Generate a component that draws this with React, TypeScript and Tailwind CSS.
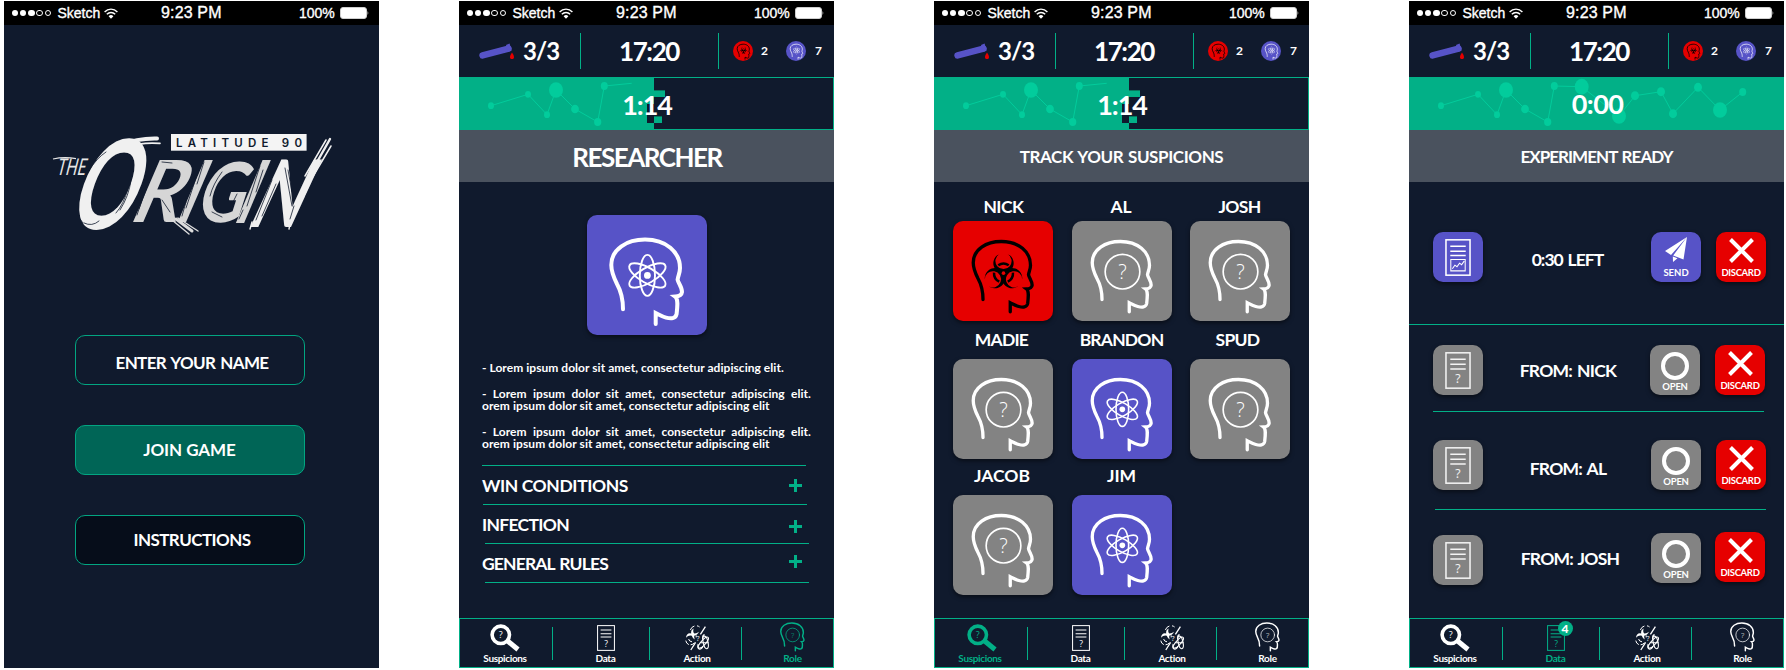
import React from "react";

type HeadKind = "atom" | "unknown" | "hazard";

function Head({ kind, className, viewBox = "0 0 120 120", stroke = 4 }: { kind: HeadKind; className: string; viewBox?: string; stroke?: number }) {
  return (
    <svg viewBox={viewBox} className={className} fill="none" stroke="currentColor" strokeLinecap="round">
      <path
        strokeWidth={stroke}
        d="M36 94.2C36 85 35 78 30 69C26.5 62 24.3 56 24.3 50C24.3 34 40 24.6 58 24.6C79 24.6 93 37 93 53C93 58 91 61 90.6 64.6C91.2 68 95 72 95 77C94.6 80.4 92 81.4 88.2 81.6C91.4 84 90.4 92 89.6 99C88.5 103.8 84 104 79 102.6C75 101.4 72 99.6 68.7 98V109"
      />
      {kind === "atom" && (
        <g strokeWidth={stroke * 0.48}>
          <ellipse cx="60.4" cy="60.4" rx="7.6" ry="20.5" />
          <ellipse cx="60.4" cy="60.4" rx="7.6" ry="20.5" transform="rotate(60 60.4 60.4)" />
          <ellipse cx="60.4" cy="60.4" rx="7.6" ry="20.5" transform="rotate(-60 60.4 60.4)" />
          <circle cx="60.4" cy="60.4" r="3.4" fill="currentColor" stroke="none" />
        </g>
      )}
      {kind === "unknown" && (
        <>
          <circle cx="60.6" cy="60.8" r="20.8" strokeWidth={stroke * 0.5} />
          <text x="60.6" y="69" textAnchor="middle" fontSize="24" fill="currentColor" stroke="none" className="font-['Open_Sans',sans-serif] font-light">?</text>
        </>
      )}
      {kind === "hazard" && (
        <g transform="translate(60.6 62.6) scale(1.08)">
          {["rotate(0)", "rotate(120)", "rotate(240)"].map((t) => (
            <g key={t} transform={t}>
              <path d="M-4.4 -21.4A11.3 11.3 0 1 0 4.4 -21.4A9 9 0 1 1 -4.4 -21.4Z" fill="currentColor" stroke="none" />
              <path d="M-5.8 -8.8A10.4 10.4 0 0 1 5.8 -8.8" strokeWidth="2.8" strokeLinecap="butt" />
            </g>
          ))}
          <circle r="2" fill="#e60000" stroke="none" />
        </g>
      )}
    </svg>
  );
}

function StatusBar() {
  return (
    <div className="flex h-6 shrink-0 items-center bg-black pl-[7.5px] font-['Liberation_Sans',sans-serif] text-sm text-white">
      <div className="flex w-[40px] gap-[1.7px]">
        {[1, 1, 1, 0, 0].map((on, i) => (
          <span key={i} className={on ? "size-[6.6px] shrink-0 rounded-full bg-white" : "size-[6.6px] shrink-0 rounded-full border border-white"} />
        ))}
      </div>
      <span className="ml-[6px] w-[46.5px] [-webkit-text-stroke:0.35px_white]">Sketch</span>
      <svg viewBox="0 0 14 11" className="h-[11px] w-[14px]" fill="none" stroke="white" strokeWidth="1.4">
        <path d="M.6 4C4.2.2 9.8.2 13.4 4M2.8 6.3C5.2 3.9 8.8 3.9 11.2 6.3" />
        <path d="M4.6 8.2Q7 6 9.4 8.2L7 10.8Z" fill="white" stroke="none" />
      </svg>
      <span className="ml-[43px] w-[64px] text-base tracking-[0.15px] [-webkit-text-stroke:0.35px_white]">9:23 PM</span>
      <span className="ml-[74px] w-[41px] [-webkit-text-stroke:0.35px_white]">100%</span>
      <svg viewBox="0 0 29 12" className="h-3 w-[29px]">
        <rect x=".5" y=".5" width="26" height="11" rx="2.5" fill="white" stroke="#cfcfcf" />
        <path d="M27.6 3.8Q29 6 27.6 8.2Z" fill="white" />
      </svg>
    </div>
  );
}

function Header() {
  return (
    <div className="flex h-[52px] shrink-0 items-center text-white">
      <div className="flex w-[121px] items-center pl-5">
        <svg viewBox="0 0 36 20" className="h-5 w-9">
          <path d="M3.6 14.4L29.5 7.6" stroke="#5753c7" strokeWidth="6.6" strokeLinecap="round" />
          <path d="M27 4L30.6 2.6L32.4 9.8L28.6 11Z" fill="#5753c7" />
          <path d="M33 11.5Q36 16 34.6 17.4Q33 18.8 31.4 17.4Q30 16 33 11.5Z" fill="#e60000" />
        </svg>
        <span className="pl-2 text-[24px] leading-none font-bold tracking-[-0.9px]">3/3</span>
      </div>
      <i className="h-9 w-px bg-[#02b087]" />
      <div className="w-[137px] pr-px text-center text-[26px] leading-none font-bold tracking-[-1.4px]">17:20</div>
      <i className="h-9 w-px bg-[#02b087]" />
      <div className="flex items-center pl-[14px] text-[12px] font-bold">
        <span className="flex size-5 items-center justify-center rounded-full bg-[#e60000] text-black">
          <Head kind="hazard" viewBox="18 18 84 96" stroke={4.5} className="h-[17px] w-[15px]" />
        </span>
        <span className="w-[33px] pl-2">2</span>
        <span className="flex size-5 items-center justify-center rounded-full bg-[#5753c7] text-white/80">
          <Head kind="atom" viewBox="18 18 84 96" stroke={5} className="h-[17px] w-[15px]" />
        </span>
        <span className="pl-[9px]">7</span>
      </div>
    </div>
  );
}

const NODES: [number, number, number][] = [
  [32, 28.7, 3], [69, 17.3, 3], [88, 37.7, 3], [97, 13, 7], [116, 32, 3.9], [138.7, 45, 3.6], [145.3, 9, 3.5], [172.7, 9.7, 7],
  [210, 39, 7], [226, 18.7, 4], [252, 14.7, 4], [264, 36.7, 4], [289, 10.3, 4], [311, 33, 7], [333.7, 15, 3.5],
];

function Timer({ full }: { full?: boolean }) {
  const nodes = full ? NODES : NODES.slice(0, 7);
  const line = nodes.map(([x, y]) => `${x},${y}`).join(" ") + (full ? "" : " 172.7,6.3");
  return (
    <div className="relative flex h-[53px] shrink-0 items-center justify-center">
      <svg viewBox="0 0 375 53" className="absolute inset-0 h-[53px] w-[375px]" shapeRendering="crispEdges">
        <rect x=".5" y=".5" width="374" height="52" fill="none" stroke="#02b087" />
        <rect width={full ? 375 : 195} height="53" fill="#02b087" />
        {!full && (
          <>
            <rect x="195" y="13" width="11" height="7" fill="#02b087" />
            <rect x="195" y="13" width="11" height="1" fill="#08775f" />
            <rect x="188" y="27" width="7" height="19" fill="#101a2d" />
            <rect x="195" y="39" width="8" height="7" fill="#02b087" />
            <rect x="195" y="39" width="8" height="1" fill="#08775f" />
          </>
        )}
        <g shapeRendering="geometricPrecision" fill="#02cc9c">
          <polyline points={line} fill="none" stroke="#02cc9c" strokeWidth="1" />
          {nodes.map(([x, y, r]) => (
            <ellipse key={x} cx={x} cy={y} rx={r} ry={r * 1.12} />
          ))}
        </g>
      </svg>
      <span className={full ? "relative pl-[2px] text-[27px] leading-none font-bold tracking-[-0.6px] text-white" : "relative pt-[2px] pl-px text-[27px] leading-none font-bold tracking-[-1.1px] text-white"}>
        {full ? "0:00" : "1:14"}
      </span>
    </div>
  );
}

function TitleBar({ children, style }: { children: string; style: string }) {
  return <div className={`flex h-[52px] shrink-0 items-center justify-center bg-[#4a525e] font-bold text-white ${style}`}>{children}</div>;
}

type Tab = "suspicions" | "data" | "action" | "role";

function DocIcon({ className, chart, strong }: { className: string; chart?: boolean; strong?: boolean }) {
  return (
    <svg viewBox="0 0 25 36" className={className} fill="none" stroke="currentColor" strokeWidth={strong ? 1.5 : 1.4}>
      <rect x=".8" y=".8" width="23.4" height="34.4" />
      <path d={chart ? "M5 7H20M5 12H20M5 16H20" : "M5 7H20M5 12H20M5 16.5H20"} />
      {chart ? (
        <path strokeWidth="1" d="M5.5 20H19.5V31H5.5ZM7 29L9.5 25.5L11.5 27L14 23.5L16 25L18.5 21.5" />
      ) : (
        <text x="12.5" y="30" fontSize="12" textAnchor="middle" fill="currentColor" stroke="none" className="font-['Open_Sans',sans-serif]">?</text>
      )}
    </svg>
  );
}

function NavBar({ active }: { active: Tab }) {
  const tone = (t: Tab) => (t === active ? "text-[#02b087]" : "text-white");
  const cell = "flex h-full flex-col items-center justify-end pb-[3px] ";
  const label = "text-[10px] leading-[12px] font-bold tracking-[-0.35px]";
  return (
    <div className="flex h-[50px] shrink-0 items-center border border-[#02b087]">
      <div className={`${cell} w-[92px] pr-[2px] ${tone("suspicions")}`}>
        <svg viewBox="0 0 30 28" className={active === "suspicions" ? "ml-[3px] h-7 w-[30px]" : "h-7 w-[30px]"} fill="none" stroke="currentColor">
          <circle cx="10.8" cy="10.8" r="8.7" strokeWidth="3.6" />
          <path d="M17 16.5L28 25.5" strokeWidth="5" />
          <text x="10.8" y="14.2" fontSize="9" textAnchor="middle" fill="currentColor" stroke="none" className="font-['Open_Sans',sans-serif]">?</text>
        </svg>
        <span className={label}>Suspicions</span>
      </div>
      <i className="h-[33px] w-px bg-[#02b087]" />
      <div className={`${cell} w-[96px] pl-[9px] ${tone("data")}`}>
        <div className="relative mb-px">
          <DocIcon className="h-[26px] w-[18px]" />
          {active === "data" && (
            <span className="absolute -top-[4px] left-[11px] flex size-[15px] items-center justify-center rounded-full bg-[#02b087] text-[12px] leading-none font-black text-white">4</span>
          )}
        </div>
        <span className={label}>Data</span>
      </div>
      <i className="h-[33px] w-px bg-[#02b087]" />
      <div className={`${cell} w-[91px] pl-[3px] ${tone("action")}`}>
        <svg viewBox="0 0 25 26" className="mb-px h-[26px] w-[25px]" fill="none" stroke="currentColor" strokeWidth="1">
          <path d="M14.6 2A5.6 5.6 0 0 0 12 .8M9.4 1A6 6 0 0 0 5.4 5" />
          <path d="M1 12.8Q1.6 7.4 6.2 8.4Q5.6 5 8.6 3.4Q7.6 7.4 9.4 8.4Q11.6 8.6 14 6.8Q12.4 10.4 9.2 10.8Q9 12.8 9.8 14.6Q7.4 13 6.8 10.8Q3.4 10 1 12.8Z" fill="currentColor" stroke="none" />
          <path d="M.8 15.6Q1.2 18.6 3.8 19.6M5.6 19.8Q8.2 19.6 9.4 17.8M3.6 14Q4.2 16.6 7 16.8M11.2 10.4V12.4" />
          <path d="M20.4 1.6L15.4 9.4M10.6 17.4L5.8 25" strokeWidth="1.3" />
          <g strokeWidth="1.1">
            <ellipse cx="18.4" cy="17.6" rx="2.3" ry="7" transform="rotate(42 18.4 17.6)" />
            <ellipse cx="20.6" cy="17.4" rx="2.4" ry="6.4" transform="rotate(-12 20.6 17.4)" />
            <path d="M13.2 19Q11.8 23.4 14.6 24.2Q17 24.2 18 21.2M17.6 14Q17.2 10.2 19.6 9.6M16 17.8H23.6" />
          </g>
          <text x="13" y="15.5" fontSize="7" textAnchor="middle" fill="currentColor" stroke="none" className="font-['Open_Sans',sans-serif]">?</text>
        </svg>
        <span className={label}>Action</span>
      </div>
      <i className="h-[33px] w-px bg-[#02b087]" />
      <div className={`${cell} flex-1 pl-[10px] ${tone("role")}`}>
        <Head kind="unknown" viewBox="22 22 76 90" stroke={4.4} className="h-[30px] w-[25px]" />
        <span className={label}>Role</span>
      </div>
    </div>
  );
}

function Phone({ children }: { children: React.ReactNode }) {
  return (
    <section className="flex h-[667px] w-[375px] shrink-0 flex-col bg-[#101a2d]">
      <StatusBar />
      {children}
    </section>
  );
}

const LETTERS = [
  { ch: "O", t: "matrix(1.06 0 -.60 1.68 65 229)" },
  { ch: "R", t: "matrix(1.02 0 -.50 1.16 127 222)" },
  { ch: "I", t: "matrix(.82 0 -.50 1.16 173 222)" },
  { ch: "G", t: "matrix(.88 0 -.36 1.12 193 222)" },
  { ch: "I", t: "matrix(.82 0 -.50 1.18 231 223)" },
  { ch: "N", t: "matrix(.9 0 -.58 1.26 245 227)" },
];

function Logo() {
  return (
    <svg viewBox="50 130 285 108" className="h-[108px] w-[285px] overflow-visible">
      <path d="M53 159Q64 156.5 76 158.6" fill="none" stroke="#e8e8e8" strokeWidth="1.2" />
      <text transform="matrix(.9 0 -.28 1.1 56 175)" fontSize="21" textLength="32" lengthAdjust="spacingAndGlyphs" fill="#e8e8e8" className="font-['Lato',sans-serif]">THE</text>
      {LETTERS.map(({ ch, t }, i) => (
        <text key={i} transform={t} fontSize="74" fill={i === 0 || i === 5 ? "#f0f0f0" : "#d6d6d6"} className="font-['Lato',sans-serif] font-bold">{ch}</text>
      ))}
      <g fill="none" stroke="#f0f0f0" strokeLinecap="round">
        <path strokeWidth="4" d="M120 145Q138 138 157 138.5" />
        <path strokeWidth="1.6" d="M126 147Q142 142 160 143.4" />
        <path strokeWidth="2.4" d="M308 178L330 139" />
        <path strokeWidth="1.5" d="M305 176L326 140M312 178L331 146" />
        <path strokeWidth="3" stroke="#dcdcdc" d="M176 219L192 231" />
        <path strokeWidth="1.4" stroke="#dcdcdc" d="M178 218L198 231M172 220L189 234" />
        <path strokeWidth="1.4" d="M252 222L250 229M256 222L254 226M290 224L289 229" />
      </g>
      <g fill="none" stroke="#101a2d" strokeWidth=".8" strokeLinecap="round">
        <path d="M78 196Q73 214 83 223M75 200Q72 208 75 216M84 178Q80 186 78 193M90 169Q97 158 106 152M84 223Q92 227 99 221M128 188Q124 204 116 213M131 180Q129 196 120 210M126 176Q125 190 121 200" />
        <path d="M150 176L137 215M146 190L139 209M162 200L170 212M162 162L172 163" />
        <path d="M200 166L186 208M204 162L197 184M186 202L182 216" />
        <path d="M222 172Q213 184 210 196M237 194L228 212M212 212L222 217" />
        <path d="M260 166L247 206M263 170L256 192M243 210L239 219" />
        <path d="M272 180L256 220M276 184L262 216M285 168L292 206M288 170L292 192M318 172L299 212M320 168L306 196M294 206L290 219" />
      </g>
      <rect x="171" y="134" width="135.6" height="16.7" fill="#f4f4f4" />
      <text x="176" y="146.7" fontSize="11.5" textLength="126" fill="#101a2d" className="font-['Inter',sans-serif] font-semibold">LATITUDE 90</text>
    </svg>
  );
}

function StartScreen() {
  const button = "flex h-[50px] w-[230px] items-center justify-center rounded-[10px] border border-[#02a581] text-[17px] font-bold text-white ";
  return (
    <Phone>
      <div className="pt-[105px] pl-[46px]"><Logo /></div>
      <div className="flex flex-col gap-10 pt-[97px] pl-[71px]">
        <button className={button + "pt-[5px] pl-1 tracking-[-0.65px] [word-spacing:1.5px]"}>ENTER YOUR NAME</button>
        <button className={button + "bg-[#006556] pr-px tracking-[-0.05px]"}>JOIN GAME</button>
        <button className={button + "bg-[#060d1a] pl-1 tracking-[-0.55px]"}>INSTRUCTIONS</button>
      </div>
    </Phone>
  );
}

function Plus({ className }: { className: string }) {
  return (
    <svg viewBox="0 0 13 13" className={`size-[13px] ${className}`}>
      <path d="M6.5 0V13M0 6.5H13" stroke="#02b087" strokeWidth="3" />
    </svg>
  );
}

function RoleScreen() {
  const row = "flex h-[39px] w-[324px] items-center justify-between border-b border-[#02b087] ";
  return (
    <Phone>
      <Header />
      <Timer />
      <TitleBar style="pt-[3px] pl-px text-[26px] tracking-[-1.5px]">RESEARCHER</TitleBar>
      <div className="flex h-[436px] flex-col text-white">
        <div className="mt-[33px] ml-[128px] size-[120px] shrink-0 rounded-[10px] bg-[#5753c7] shadow-[0_2px_4px_rgba(0,0,0,.5)]">
          <Head kind="atom" className="size-[120px]" />
        </div>
        <div className="mt-[27px] ml-[23px] flex w-[329px] flex-col gap-[13px] text-[12px] leading-[12.5px] font-bold">
          <p className="tracking-[0.04px]">- Lorem ipsum dolor sit amet, consectetur adipiscing elit.</p>
          {[0, 1].map((i) => (
            <div key={i}>
              <p className="tracking-[0.04px] [text-align-last:justify]">- Lorem ipsum dolor sit amet, consectetur adipiscing elit.</p>
              <p className="tracking-[0.08px]">orem ipsum dolor sit amet, consectetur adipiscing elit</p>
            </div>
          ))}
        </div>
        <div className="mt-[14px] ml-[23px] text-[17.5px] leading-none font-bold">
          <div className="h-px w-[324px] bg-[#02b087]" />
          <div className={row + "ml-px pr-[5px]"}><span className="-ml-px pt-[2px] tracking-[-0.4px]">WIN CONDITIONS</span><Plus className="mt-[2px]" /></div>
          <div className={row + "ml-[3px] pr-[7px]"}><span className="-ml-[3px] pt-[2px] tracking-[-0.7px]">INFECTION</span><Plus className="mt-[5px]" /></div>
          <div className={row + "ml-[3px] pr-[7px]"}><span className="-ml-[3px] pt-[2px] tracking-[-0.85px] [word-spacing:1.5px]">GENERAL RULES</span><Plus className="mb-[2px]" /></div>
        </div>
      </div>
      <NavBar active="role" />
    </Phone>
  );
}

const TILE: Record<HeadKind, string> = {
  hazard: "bg-[#e60000] text-black",
  unknown: "bg-[#838383] text-white",
  atom: "bg-[#5753c7] text-white",
};

function Suspect({ name, kind, label }: { name: string; kind: HeadKind; label: string }) {
  return (
    <div className="flex w-[100px] flex-col">
      <div className={`w-[100px] text-center text-[17.5px] leading-[18px] font-bold text-white ${label}`}>{name}</div>
      <div className={`size-[100px] rounded-[10px] shadow-[0_2px_4px_rgba(0,0,0,.5)] ${TILE[kind]}`}>
        <Head kind={kind} className="size-[100px]" />
      </div>
    </div>
  );
}

function SuspicionsScreen() {
  return (
    <Phone>
      <Header />
      <Timer />
      <TitleBar style="pt-px text-[17px] tracking-[-0.4px] [word-spacing:1px]">TRACK YOUR SUSPICIONS</TitleBar>
      <div className="h-[436px] pt-[16px] pl-[19px]">
        <div className="flex gap-[18.5px]">
          <Suspect name="NICK" kind="hazard" label="h-[23px] pl-px tracking-[-0.5px]" />
          <Suspect name="AL" kind="unknown" label="h-[23px] pr-px" />
          <Suspect name="JOSH" kind="unknown" label="h-[23px] pr-px tracking-[-0.7px]" />
        </div>
        <div className="flex gap-[18.5px] pt-[10px]">
          <Suspect name="MADIE" kind="unknown" label="h-[28px] pr-[3px] tracking-[-0.8px]" />
          <Suspect name="BRANDON" kind="atom" label="h-[28px] tracking-[-0.8px]" />
          <Suspect name="SPUD" kind="unknown" label="h-[28px] pr-[5px] tracking-[-0.7px]" />
        </div>
        <div className="flex gap-[18.5px] pt-[8px]">
          <Suspect name="JACOB" kind="unknown" label="h-[28px] pr-[2px]" />
          <Suspect name="JIM" kind="atom" label="h-[28px]" />
        </div>
      </div>
      <NavBar active="suspicions" />
    </Phone>
  );
}

const TILE_BASE = "flex size-[50px] shrink-0 flex-col items-center rounded-[10px] text-white shadow-[0_2px_4px_rgba(0,0,0,.5)] ";

function Discard({ className }: { className: string }) {
  return (
    <button className={`${TILE_BASE} bg-[#e60000] pt-[6px] ${className}`}>
      <svg viewBox="0 0 25 25" className="size-[25px]"><path d="M1.5 1.5L23.5 23.5M23.5 1.5L1.5 23.5" stroke="white" strokeWidth="4" /></svg>
      <span className="mt-[4px] text-[9.5px] leading-[12px] font-bold tracking-[-0.35px]">DISCARD</span>
    </button>
  );
}

function Open({ className }: { className: string }) {
  return (
    <button className={`${TILE_BASE} bg-[#838383] pt-[7px] ${className}`}>
      <span className="size-[28px] rounded-full border-4 border-white" />
      <span className="pt-px text-[9.5px] leading-[12px] font-bold tracking-[-0.25px]">OPEN</span>
    </button>
  );
}

function DataRow({ from, text, open, discard, doc }: { from: string; text: string; open: string; discard: string; doc: string }) {
  return (
    <div className="flex h-[50px] pl-6">
      <div className={`${TILE_BASE} bg-[#838383] pt-[7px] text-white/90 ${doc}`}><DocIcon strong className="h-[37px] w-[26px]" /></div>
      <div className={`w-[170px] text-center text-[17.5px] leading-[50px] font-bold tracking-[-0.75px] [word-spacing:1.5px] text-white ${text}`}>{from}</div>
      <Open className={open} />
      <Discard className={discard} />
    </div>
  );
}

function DataScreen() {
  return (
    <Phone>
      <Header />
      <Timer full />
      <TitleBar style="pt-px text-[17px] tracking-[-0.95px] [word-spacing:1.5px]">EXPERIMENT READY</TitleBar>
      <div className="h-[436px]">
        <div className="flex h-[143px] border-b border-[#02b087] pt-[50px] pl-6">
          <div className={`${TILE_BASE} bg-[#5753c7] pt-[7px]`}><DocIcon chart strong className="h-[37px] w-[26px]" /></div>
          <div className="w-[168px] pt-[3px] pl-px text-center text-[17.5px] leading-[50px] font-bold tracking-[-0.95px] [word-spacing:1.5px] text-white">0:30 LEFT</div>
          <button className={`${TILE_BASE} bg-[#5753c7] pt-[5px]`}>
            <svg viewBox="0 0 22 25" className="h-[25px] w-[22px]" fill="white">
              <path d="M22 0L0 14L6 18ZM22 0L8.2 18.6L18.5 22.5ZM7.8 19.5L12.5 21.3L8 25Z" />
            </svg>
            <span className="mt-[5px] text-[9.5px] leading-[12px] font-bold">SEND</span>
          </button>
          <Discard className="ml-[15px]" />
        </div>
        <div className="pt-5"><DataRow from="FROM: NICK" doc="" text="pt-px" open="-ml-[3px]" discard="ml-[15px]" /></div>
        <div className="mt-4 ml-6 h-px w-[331px] bg-[#02b087]" />
        <div className="pt-7"><DataRow from="FROM: AL" doc="" text="pt-[4px]" open="-ml-[2px]" discard="ml-[15px]" /></div>
        <div className="mt-[19px] ml-[26px] h-px w-[331px] bg-[#02b087]" />
        <div className="pt-[22px]"><DataRow from="FROM: JOSH" doc="mt-[3px]" text="pt-[2px] pl-[4px]" open="mt-px -ml-[2px]" discard="ml-[14px]" /></div>
      </div>
      <NavBar active="data" />
    </Phone>
  );
}

export default function App() {
  return (
    <main className="flex h-[670px] w-[1786px] overflow-hidden bg-white pt-px pl-1 font-['Lato',sans-serif]">
      <StartScreen />
      <div className="flex gap-[100px] pl-20">
        <RoleScreen />
        <SuspicionsScreen />
        <DataScreen />
      </div>
    </main>
  );
}
